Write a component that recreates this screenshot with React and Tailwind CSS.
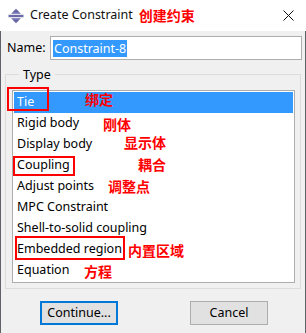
import React from 'react';

const items = [
  { name: 'Tie', selected: true },
  { name: 'Rigid body' },
  { name: 'Display body' },
  { name: 'Coupling' },
  { name: 'Adjust points' },
  { name: 'MPC Constraint' },
  { name: 'Shell-to-solid coupling' },
  { name: 'Embedded region' },
  { name: 'Equation' },
];

// red annotations painted over the screenshot
const notes = [
  { text: '绑定', cls: 'left-[85px] top-[90px]' },
  { text: '刚体', cls: 'left-[103px] top-[115px]' },
  { text: '显示体', cls: 'left-[124px] top-[133px]' },
  { text: '耦合', cls: 'left-[138px] top-[155px]' },
  { text: '调整点', cls: 'left-[108px] top-[177px]' },
  { text: '内置区域', cls: 'left-[128px] top-[241px]' },
  { text: '方程', cls: 'left-[84px] top-[262px]' },
];

const boxes = [
  'left-[7px] top-[87px] w-[42px] h-[24px]',
  'left-[13px] top-[156px] w-[62px] h-[20px]',
  'left-[15px] top-[236px] w-[110px] h-[24px]',
];

const AppIcon = () => (
  <svg width="16" height="16" viewBox="0 0 16 16">
    <defs>
      <linearGradient id="g" x1="0" y1="0" x2="0" y2="1">
        <stop offset="0" stopColor="#9a9ad0" />
        <stop offset="0.5" stopColor="#5a5a9a" />
        <stop offset="1" stopColor="#9a9ad0" />
      </linearGradient>
    </defs>
    <path d="M8 0.5 L13 6 H3 Z" fill="url(#g)" />
    <rect x="0.5" y="6.8" width="15" height="2.4" fill="#6b6baa" />
    <path d="M8 15.5 L13 10 H3 Z" fill="url(#g)" />
  </svg>
);

const App = () => {
  return (
    <div className="relative w-[306px] h-[333px] flex flex-col overflow-hidden text-[12.5px] text-black font-['Noto_Sans',sans-serif]">
      {/* Title bar */}
      <div className="h-[31px] bg-white flex items-center pl-[8px] pr-[12px]">
        <AppIcon />
        <span className="ml-[6px] text-[12.5px] text-[#111]">Create Constraint</span>
        <span className="ml-[6px] text-[14px] font-bold text-[#ff0000] font-['Noto_Sans_CJK_SC',sans-serif]">创建约束</span>
        <svg className="ml-auto" width="11" height="11" viewBox="0 0 11 11">
          <path d="M0.5 0.5 L10.5 10.5 M10.5 0.5 L0.5 10.5" stroke="#111" strokeWidth="1" />
        </svg>
      </div>

      {/* Body */}
      <div className="flex-1 bg-[#f0f0f0] border-l border-r border-[#5f6368] flex flex-col">
        <div className="flex items-center mt-[5px] pl-[6px] pr-[3px]">
          <span className="w-[43px]">Name:</span>
          <div className="flex-1 h-[24px] bg-white border border-[#adadad] flex items-center pl-[2px]">
            <span className="bg-[#3399ff] text-white leading-[17px] px-[1px]">Constraint-8</span>
          </div>
        </div>

        <fieldset className="mt-[7px] ml-[4px] mr-[4px] border border-[#dcdcdc] pl-[6px] pr-[5px] pb-[2px] pt-0 h-[222px] flex flex-col">
          <legend className="ml-[7px] px-[4px] leading-[15px]">Type</legend>
          <div className="mt-[8px] flex-1 bg-white border border-[#adadad] p-px">
            {items.map((it) => (
              <div
                key={it.name}
                className={`h-[21px] flex items-center pl-[3px] ${it.selected ? 'bg-[#3399ff] text-white' : ''}`}
              >
                {it.name}
              </div>
            ))}
          </div>
        </fieldset>

        <div className="flex items-start pl-[39px] mt-[12px] gap-[72px]">
          <button className="w-[78px] h-[24px] bg-[#e1e1e1] border-2 border-[#0078d7] leading-none">
            Continue...
          </button>
          <button className="w-[78px] h-[24px] bg-[#e1e1e1] border border-[#adadad] leading-none">
            Cancel
          </button>
        </div>
      </div>

      {boxes.map((b) => (
        <div key={b} className={`absolute border-2 border-[#ff0000] ${b}`} />
      ))}
      {notes.map((n) => (
        <span
          key={n.text}
          className={`absolute text-[14px] leading-[18px] font-bold text-[#ff0000] font-['Noto_Sans_CJK_SC',sans-serif] ${n.cls}`}
        >
          {n.text}
        </span>
      ))}
    </div>
  );
};

export default App;
